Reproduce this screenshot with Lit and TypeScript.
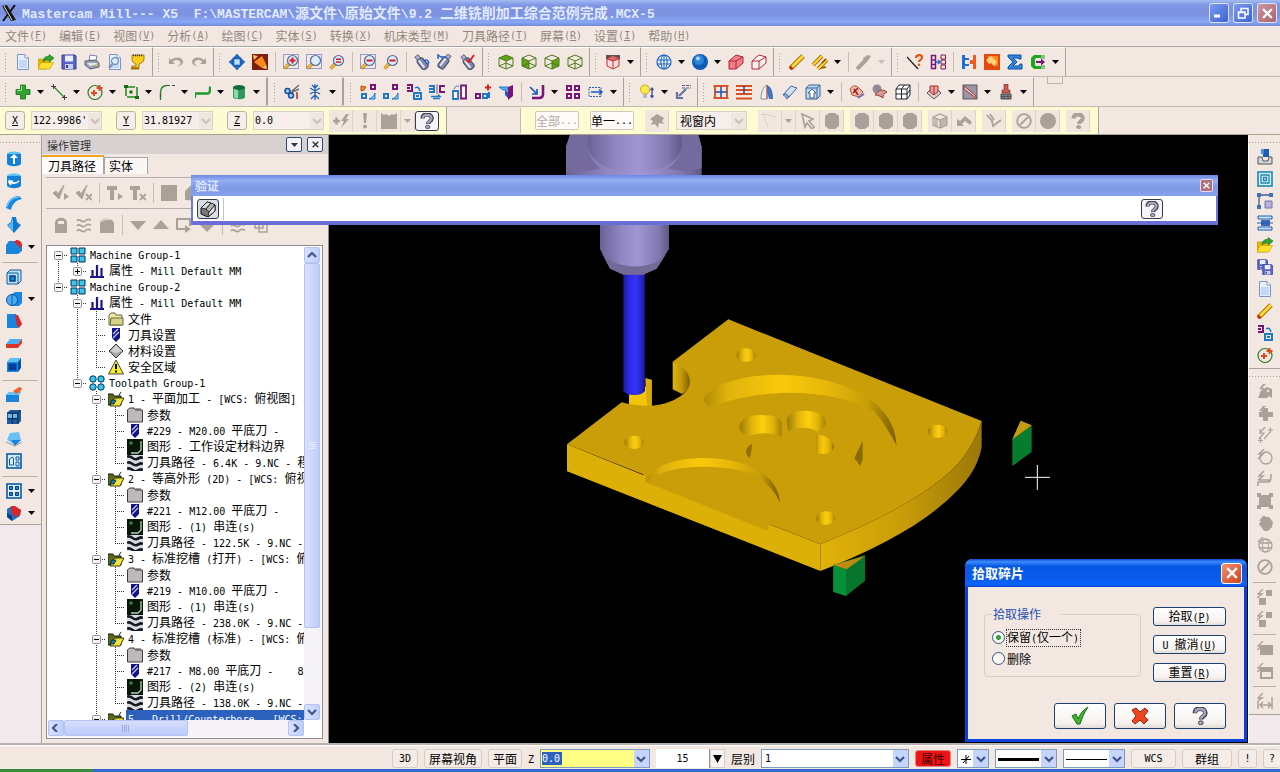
import { LitElement, html, svg, css } from "lit";

const G = "#aaa299";

/* ---------- icon building blocks, all on a 16 x 16 grid ---------- */

const page = svg`<path d="M2.500 .5h7.500l3.500 3.500v11.500h-11z" fill="#e4eefc" stroke="#7f95c4"/><path d="M4 6h8v8H4z" fill="#c3d8f6"/><path d="M10 .5v3.500h3.500" fill="#fff" stroke="#7f95c4"/>`;
const folderArrow = svg`<path d="M0 5h5l1 1.500h6V9l-3 6H0z" fill="#e8b800" stroke="#b98c00" stroke-width=".6"/><path d="M3 8.500h12.500L12 15H0z" fill="#ffe02e" stroke="#c49a00" stroke-width=".6"/><path d="M5 8c0-4 2.500-6 6-5.500V.5L16 4l-4.500 4V6C9 5.500 7 6 5 8z" fill="#2fa52f" stroke="#146b18" stroke-width=".6"/>`;
const floppy = (x = 0, y = 0) => svg`<g transform=${`translate(${x} ${y})`}><path d="M1 1h13l1 1v13H1z" fill="#5a62c8" stroke="#363c92"/><path d="M4 1.500h8v6H4z" fill="#e9eefc"/><path d="M4 10h8v5H4z" fill="#c9cfee"/><path d="M5 11h2v3H5z" fill="#363c92"/></g>`;
const lens = (inner: unknown, box = false) => svg`${box ? svg`<path d="M.5 .5h15v14H.5z" fill="none" stroke="#2b50b8" stroke-dasharray="1 1"/>` : ""}<path d="M6.500 9.500L1.500 14.500" stroke="#c98a1a" stroke-width="3.200"/><path d="M6.500 9.300L1.800 14" stroke="#ffd24a" stroke-width="1.200"/><circle cx="9.500" cy="6.500" r="5" fill="#dcebfb" stroke="#5b6e92" stroke-width="1.200"/>${inner}`;
const flask = (extra: unknown) => svg`<g transform="rotate(-38 8 9)"><rect x="4.500" y="4" width="7" height="12" rx="2.500" fill="#8087a8" stroke="#3d4468"/><rect x="6" y="5" width="2" height="9" fill="#e3e7f5"/><rect x="6" y="0" width="4" height="4" fill="#a9b0cc" stroke="#3d4468" stroke-width=".7"/></g>${extra}`;
const cube = (face: string, c: string, line = "#4e7a1e") => svg`${face === "t" ? svg`<path d="M1 4l7-3 7 3-7 3z" fill=${c}/>` : ""}${face === "l" ? svg`<path d="M1 4l7 3v8l-7-3z" fill=${c}/>` : ""}${face === "r" ? svg`<path d="M15 4L8 7v8l7-3z" fill=${c}/>` : ""}<path d="M1 4l7-3 7 3v8l-7 3-7-3zM1 4l7 3 7-3M8 7v8M1 12l7-3 7 3" fill="none" stroke=${line}/>`;
const sq = (x: number, y: number, c: string, s = 5) => svg`<rect x=${x + 1} y=${y + 1} width=${s - 1} height=${s - 1} fill="#fff" stroke=${c} stroke-width="2"/>`;
const P = "#7a1478";
const B = "#1f78c8";
const block = (top = "#5cc0f6") => svg`<path d="M1 5l3-4h11l-3 4z" fill=${top}/><path d="M1 5h11v10H1z" fill="#1688e0"/><path d="M12 5l3-4v10l-3 4z" fill="#0b4f9e"/>`;
const bolt = svg`<path d="M6 1L2 6h3L2 11l6-6H5l4-4z" fill=${G}/>`;
const plus = (x: number, y: number, c: string, s = 3) => svg`<path d=${`M${x - s} ${y}h${2 * s}M${x} ${y - s}v${2 * s}`} stroke=${c} stroke-width="2"/>`;
const question = (c1: string, c2: string) => svg`<path d="M3.500 5.500C3.500 2.500 5.500 1.500 8 1.500s4.800 1.300 4.800 3.800c0 3-3.800 3.200-3.800 5.700" fill="none" stroke=${c2} stroke-width="4"/><path d="M3.800 5.200C3.800 2.700 5.600 1.800 8 1.800s4.500 1.200 4.500 3.500c0 2.800-3.700 3-3.700 5.200" fill="none" stroke=${c1} stroke-width="2.200"/><ellipse cx="8.700" cy="14" rx="2.200" ry="1.700" fill=${c1} stroke=${c2} stroke-width=".8"/>`;

const ICONS: Record<string, unknown> = {
  page,
  open: folderArrow,
  save: floppy(),
  print: svg`<path d="M5 6l1-5 7 1-1 5z" fill="#fff" stroke="#7785ad"/><path d="M1 7l11-1 3 3v4l-9 2-5-4z" fill="#9aa0b6" stroke="#555c78"/><path d="M3 9l9 0 2 1-8 2z" fill="#e6e8f0"/><path d="M10 12l4-1" stroke="#e0b020"/>`,
  preview: svg`${page}<circle cx="8" cy="7" r="3.500" fill="#d7ecff" stroke="#5272b0"/><path d="M5.500 10L2 14" stroke="#8494b8" stroke-width="2.500"/>`,
  cup: svg`<path d="M2 1h12v4c0 3-3 4-5 5v4H2v-2h4v-2C4 9 2 8 2 5z" fill="#ffce1a" stroke="#8a6500" stroke-width=".8"/><path d="M3 1.500h10" stroke="#333" stroke-width="1.500" stroke-dasharray="1 1"/><path d="M1 14.500h8" stroke="#a07000" stroke-width="2"/>`,
  undo: svg`<path d="M1 4v6h6L4.800 7.800C7 5 12 5.500 12.500 8.500c.2 2-1.500 3-3.500 3.500 4 0 6-2 6-4.500C14.500 3 7 2 3 6z" fill=${G}/>`,
  redo: svg`<path d="M15 4v6H9l2.200-2.200C9 5 4 5.500 3.500 8.500c-.2 2 1.500 3 3.500 3.500-4 0-6-2-6-4.500C1.500 3 9 2 13 6z" fill=${G}/>`,
  pan: svg`<path d="M8 0l3.500 4h-7zM8 16l3.500-4h-7zM0 8l4-3.500v7zM16 8l-4-3.500v7z" fill="#1d72cf" stroke="#0b4288" stroke-width=".5"/><rect x="4.500" y="4.500" width="7" height="7" fill="#bfe0ff" stroke="#1a62b8" stroke-width="1.600"/>`,
  fit: svg`<rect width="16" height="16" fill="#7c1f10"/><path d="M2 8l8-6 4 8-4 4z" fill="#ff8a1c"/><path d="M1 1l5 1-4 4zM15 15l-5-1 4-4z" fill="#ffc26a"/>`,
  zin: lens(plus(9.5, 6.5, "#d41c1c"), true),
  zwin: lens("", true),
  zeq: lens(svg`<path d="M7 5.200h5M7 8h5" stroke="#d41c1c" stroke-width="1.600"/>`),
  zoutb: lens(svg`<path d="M6.500 6.500h6" stroke="#d41c1c" stroke-width="2"/>`, true),
  zout: lens(svg`<path d="M6.500 6.500h6" stroke="#d41c1c" stroke-width="2"/>`),
  flask1: flask(svg`<path d="M10 7c3-2 4-1 5 2M15 10l-3-1" stroke="#245fc0" fill="none" stroke-width="1.500"/>`),
  flask2: svg`<g transform="rotate(75 8 8)">${flask("")}</g><path d="M1 5V1l3 2h5" stroke="#245fc0" fill="none" stroke-width="1.500"/>`,
  flask3: flask(svg`<path d="M6 6l3 2 5-7" stroke="#d81c1c" fill="none" stroke-width="1.800"/>`),
  cubeT: cube("t", "#62a512"),
  cubeL: cube("l", "#62a512"),
  cubeR: cube("r", "#62a512"),
  cubeN: cube("", ""),
  redcube: svg`<path d="M1 1h14v4H1z" fill="#555"/><path d="M2 5l6-3 6 3v7l-6 3-6-3z" fill="#fbdcdc" stroke="#b33"/><path d="M2 5l6-3 6 3-6 2z" fill="#e06868"/><path d="M2 5l6 2 6-2M8 7v8" stroke="#b33" fill="none"/>`,
  globe: svg`<circle cx="8" cy="8" r="7" fill="#e9f4ff" stroke="#1a62b8" stroke-width="1.200"/><ellipse cx="8" cy="8" rx="3.200" ry="7" fill="none" stroke="#1a62b8"/><path d="M1 6h14M1 10h14M8 1v14" stroke="#1a62b8" fill="none"/>`,
  ball: svg`<circle cx="8" cy="8" r="8" fill="#0f5cb4"/><circle cx="7" cy="6" r="5" fill="#2d86dd"/><circle cx="6" cy="4.500" r="2" fill="#a9d6ff"/>`,
  solidRed: svg`<path d="M1 7l7-6 7 2v6l-7 6H1z" fill="#ef7f88" stroke="#b32232"/><path d="M1 7h7l7-4M8 7v8" stroke="#b32232" fill="none"/>`,
  wireRed: svg`<path d="M1 7l7-6 7 2v6l-7 6H1z" fill="#fff6f4" stroke="#b32232"/><path d="M1 7h7l7-4M8 7v8" stroke="#b32232" fill="none"/>`,
  pencil: svg`<path d="M2 14L14 2" stroke="#a87400" stroke-width="5"/><path d="M2.500 13.500L14 2" stroke="#ffd63a" stroke-width="3"/><path d="M1 15l2-2" stroke="#b83010" stroke-width="4"/>`,
  pencils: svg`<path d="M1 11L10 2M6 15l9-9" stroke="#a87400" stroke-width="4"/><path d="M1 11L10 2M6 15l9-9" stroke="#ffd63a" stroke-width="2"/><path d="M10 9l4-4M9 14l5-1" stroke="#8b4a00" stroke-width="1.500"/>`,
  gpencil: svg`<path d="M1 15L9 7" stroke=${G} stroke-width="4"/><path d="M7 4l5-3 3 1-4 6-3 1z" fill=${G}/>`,
  ask: svg`<path d="M0 3l11 12" stroke="#222" stroke-width="1.300"/><path d="M9 4c0-3 5-4 6-1.500S12 6 12 8" stroke="#e8531c" stroke-width="2.200" fill="none"/><circle cx="12" cy="10.800" r="1.300" fill="#e8531c"/>`,
  table: svg`<path d="M1.500 1v14M5.500 1v14M1 1.500h5M1 6h5M1 10.500h5M1 14.500h5" stroke=${P} stroke-width="1.500"/><path d="M11 1h4.500v4H11zM11 6h4.500v4H11zM11 11h4.500v4H11z" fill="#ffe9a0" stroke=${P}/><path d="M6 8h4M8 6l2 2-2 2" stroke="#2a6fd0" stroke-width="1.400" fill="none"/>`,
  link: svg`<path d="M1 1h3v14H1zM4 4h4v2H4zM4 10h4v2H4z" fill="#1c6fd4"/><path d="M12 1h3v14h-3v-5l-3 0V6h3z" fill="#ef5a24"/>`,
  orange: svg`<rect width="16" height="16" fill="#e3480f"/><path d="M3 2l11 0v9l-3 2z" fill="#ff8a20"/><path d="M2 6l5-4 6 6-3 4-3-3-2 1z" fill="#ffd27a"/>`,
  sigma: svg`<path d="M1 1h13v4h-2l-1-1H6l4 4-4 4h6l1-2h2v5H1v-2l5-5-5-5z" fill="#2f86dd" stroke="#114f9e"/>`,
  green: svg`<path d="M11 1H4L1 4v8l3 3h7v-3H6L5 11V5l1-1h5z" fill="#1da51d"/><path d="M12 1v4M14 1v4M12 11v4M14 11v4" stroke="#1da51d"/><path d="M6 7h5V4.500L15 8l-4 3.500V9H6z" fill=${P}/>`,

  plus: svg`<path d="M5.500 1h5v4.500H15v5h-4.500V15h-5v-4.500H1v-5h4.500z" fill="#2ea32e" stroke="#147016" stroke-width=".8"/><path d="M6.500 2v4.500H2" stroke="#9be58f" fill="none"/>`,
  line: svg`<path d="M3 3l10 10" stroke="#2a8c2a" stroke-width="1.300"/><path d="M0 2.500h5M2.500 0v5M11 13.500h5M13.500 11v5" stroke="#444"/>`,
  circle: svg`<circle cx="8" cy="8.500" r="7" fill="none" stroke="#2f7a2f" stroke-width="1.200"/>${plus(7, 9, "#e04a1c")}${plus(12.5, 4, "#e04a1c")}`,
  rect: svg`<rect x="3" y="3" width="11" height="10" fill="none" stroke="#1d8a1d" stroke-width="1.500" stroke-dasharray="9 2"/><path d="M1 1h4v3H1zM12 12h4v3h-4zM6.500 6.500h3v3h-3z" fill="#156e15"/>`,
  arc: svg`<path d="M1.500 15V9C1.500 4 4 1.500 8 1.500" fill="none" stroke="#2a8c2a" stroke-width="1.500"/><path d="M8 1.500h8M1.500 10v6" stroke="#444" stroke-dasharray="3 2" fill="none"/>`,
  spline: svg`<path d="M0 14V9.500h13c2 0 2-2 2-7" fill="none" stroke="#1e9a2a" stroke-width="2.300"/>`,
  cyl: svg`<path d="M2 3v10c0 3 12 3 12 0V3z" fill="#2f9a5c"/><path d="M3 4v9c1 1 3 2 4 1.500V4z" fill="#8fd8ac"/><ellipse cx="8" cy="3.500" rx="6" ry="2.500" fill="#166b3c"/>`,
  trim: svg`<path d="M15 1L8 7M15 5L6 9" stroke="#6a6a6a" stroke-width="1.500"/><circle cx="3.500" cy="7" r="2.500" fill="#9fd0ff" stroke="#1a4f9c" stroke-width="1.500"/><circle cx="7" cy="11.500" r="2.500" fill="#9fd0ff" stroke="#1a4f9c" stroke-width="1.500"/><path d="M13 8v7" stroke="#d01c1c" stroke-width="1.500"/>`,
  star: svg`<path d="M8 0v16M3 4l10 6M13 4L3 10M5 1l3 3 3-3M4 15l4-4 4 4" stroke="#1a62b8" stroke-width="1.300" fill="none"/>`,
  x1: svg`${sq(10, 0, P)}<path d="M1 7V2l5 1-2 3z" fill="#f08a30" stroke="#c04a10"/>${sq(1, 9, B)}<path d="M9 15c3-1 5-3 6-6v6z" fill="#7cc2f4" stroke=${B}/>`,
  x2: svg`${sq(9, 0, P)}${sq(0, 9, B)}<path d="M9 15c3-1 5-3 6-6v6z" fill="#7cc2f4" stroke=${B}/>`,
  x3: svg`<path d="M1 1h5v6H1M1 4h3" fill="none" stroke=${P} stroke-width="2"/><path d="M8 14V9h7v6H7M10 12h3" fill="none" stroke=${B} stroke-width="2"/><path d="M9 4c3-2 4 0 5 3" stroke=${B} fill="none" stroke-width="1.500"/>`,
  x4: svg`<path d="M0 2h5v6H0M0 5h4" fill="none" stroke=${B} stroke-width="2"/><path d="M16 2h-5v6h5" fill="none" stroke=${P} stroke-width="2"/><path d="M8 0v10" stroke="#666"/><path d="M2 12.500h9l-2-2M11 14.500H4" stroke=${B} fill="none" stroke-width="1.500"/>`,
  x5: svg`<path d="M1 7h5v8H1z" fill="#fff" stroke=${B} stroke-width="1.800"/><path d="M9 1.500h5v13H9z" fill="#fff" stroke=${P} stroke-width="1.800"/><path d="M2 5c1-3 3-3 5-3" stroke=${B} fill="none"/>`,
  x6: svg`${sq(0, 9, P)}${sq(7, 9, B)}<path d="M14 14V8" stroke=${B} stroke-width="2"/>${plus(13, 3.5, "#d82020")}`,
  x7: svg`<path d="M1 3h9v3H5z" fill="#5cb2f2" stroke=${B}/><path d="M10 3l5-2v11l-5 4z" fill=${P}/><path d="M7 6l3 2v6l-3-3z" fill="#1f58c8"/>`,
  x8: svg`<path d="M1 3l6 6M8 5v5H3" fill="none" stroke="#1d5ac2" stroke-width="1.700"/><path d="M14 1v9c0 3-2 4-4 4H3" fill="none" stroke=${P} stroke-width="2.600"/>`,
  x9: svg`${sq(1, 1, P, 5)}${sq(9, 1, P, 5)}${sq(1, 9, P, 5)}${sq(9, 9, P, 5)}`,
  x10: svg`<rect x="1" y="3.500" width="12" height="9" fill="none" stroke="#345fb0" stroke-dasharray="2 1"/><path d="M3 8h11M11 5.500L14 8l-3 2.500" stroke="#1d5ac2" fill="none" stroke-width="1.500"/>`,
  bulb: svg`<circle cx="6" cy="5.500" r="4.500" fill="#f7e94a" stroke="#c2ac1a"/><path d="M4 10h4v4H4z" fill="#b9b9c6"/><path d="M13 5v7M11.500 6L13 4l1.500 2M11.500 11.500L13 13.500l1.500-2" stroke="#444c9c" fill="none" stroke-width="1.300"/>`,
  note: svg`<path d="M7 1.500h9M7 4h9" stroke="#55597a" stroke-dasharray="3 1"/><path d="M11 5L4 12M2 8v6h6" stroke="#6a6fa2" stroke-width="2.200" fill="none"/>`,
  grid: svg`<rect x="2" y="2" width="12" height="12" fill="none" stroke="#d94e1b" stroke-width="1.800"/><path d="M8 2v12M2 8h12" stroke="#1e4fb0" stroke-width="1.500"/><path d="M0 2h16M0 14h16" stroke="#d94e1b"/>`,
  rows: svg`<path d="M0 2h16M0 6h16M0 10h16M0 14.500h16" stroke="#d94e1b" stroke-width="1.800"/><path d="M8 2v8" stroke="#1e4fb0" stroke-width="1.500"/>`,
  fin: svg`<path d="M2 15C2 8 4 3 8 1v14z" fill="#e6f1fc" stroke="#777" stroke-width=".8"/><path d="M8 1c5 2 6 8 6 14h-4L8 8z" fill="#3b77c6"/><path d="M8 1v14" stroke="#d94e1b"/>`,
  tube: svg`<path d="M1 11l8-9 6 2-8 9z" fill="#cfe0f5" stroke="#47618e"/><path d="M1 11c3-2 5 0 6 2l-3 2" fill="#87a6d6" stroke="#47618e"/>`,
  boxup: svg`<path d="M1 4l3-3h11v11l-3 3H1z" fill="#bcd8f4" stroke="#3c618f"/><path d="M1 4h11v11M12 4l3-3" stroke="#3c618f" fill="none"/><path d="M5 14V9H3l4-4 4 4H9v5z" fill="#fff" stroke="#3c618f"/>`,
  surf1: svg`<path d="M1 5C4 0 8 2 10 4l4 4-4 5-7-2z" fill="#f3b9a5" stroke="#b8503c"/><path d="M5 5l4 6M9 4L4 9" stroke="#902020" stroke-width="1.500"/><path d="M9 14l6-4" stroke="#6676c0" stroke-width="2"/>`,
  surf2: svg`<circle cx="5" cy="5" r="4.500" fill="#8e8a96"/><path d="M3 11c4-6 8-6 12-3-3 1-4 3-4 6-3-2-5-3-8-3z" fill="#cf9a94" stroke="#a83a34"/>`,
  wirebox: svg`<path d="M1 5l3-4h11v10l-3 4H1zM1 5h11v10M12 5l3-4M6.500 5v10M1 10h11M6.500 5l3-4M12 10l3-4" fill="#fff" stroke="#223"/>`,
  mill: svg`<path d="M1 9l3-3 8 0 3 3-7 6z" fill="#d8d4d8" stroke="#555"/><path d="M4 2h8v6l-4 3-4-3z" fill="#e3a49e" stroke="#b02a2a"/><path d="M8 2v9" stroke="#b02a2a"/>`,
  mill2: svg`<rect x="1" y="1" width="14" height="14" fill="#9b96a4" stroke="#5c5764"/><path d="M2 2l12 10v2L2 5z" fill="#e7e3ec" stroke="#b02a2a"/>`,
  drill: svg`<path d="M6 0h4v6h2v3H4V6h2z" fill="#c95b52" stroke="#7c2a26" stroke-width=".6"/><path d="M3 10h10v5H3z" fill="#8a8792" stroke="#444"/><path d="M3 12.500h10M6 10v5M10 10v5" stroke="#444" stroke-width=".7"/>`,

  gplus: svg`<path d="M0 8h7M3.500 4.500v7" stroke=${G} stroke-width="2.600"/><path d="M13 1L8 8h3l-3 7 8-9h-3l3-5z" fill=${G}/>`,
  gbang: svg`<path d="M6 0h4l-1 10H7z" fill=${G}/><circle cx="8" cy="13.500" r="2" fill=${G}/>`,
  gbox: svg`<path d="M0 0l3 2 2-1 3 2 3-2 2 1 3-2v16H0z" fill=${G}/>`,
  gtool: svg`<path d="M1 6l7-5 7 4-2 3 2 3-5-1-1 5-3-4-4 1 2-4z" fill=${G}/>`,
  gdots: svg`<path d="M1 1l5 13M1 1l14 3" stroke=${G} stroke-dasharray="1 2"/>`,
  garrow: svg`<path d="M2 1l11 5-4 2 5 6-2 2-5-6-2 4z" fill="none" stroke=${G} stroke-width="1.700"/>`,
  gball: svg`<path d="M5 0h6l4 3v10l-4 3H5l-4-3V3z" fill=${G}/>`,
  gbig: svg`<circle cx="8" cy="8" r="8" fill=${G}/>`,
  gcubew: svg`<path d="M1 4l7-3 7 3v8l-7 3-7-3zM1 4l7 3 7-3M8 7v8M3 5v8M5 6v8" fill="none" stroke=${G} stroke-width="1.200"/><path d="M8 7l7-3v8l-7 3z" fill=${G} opacity=".7"/>`,
  gback: svg`<path d="M1 13V6l3 2 5-5 7 6-2 3-5-4-3 3 2 2z" fill=${G}/>`,
  gcheck: svg`<path d="M1 2l5 6 1 5 8-6M4 1l4 6" fill="none" stroke=${G} stroke-width="1.800"/>`,
  gno: svg`<circle cx="8" cy="8" r="6.800" fill="none" stroke=${G} stroke-width="1.800"/><path d="M4 12l8-8" stroke=${G} stroke-width="1.800"/>`,
  gask: question(G, G),
  ask3d: question("#a8a8bc", "#3a3a4c"),

  l1: svg`<ellipse cx="8" cy="3" rx="7" ry="2.500" fill="#5cc0f6"/><path d="M1 3h14v10c-3 3-11 3-14 0z" fill="#1480d8"/><path d="M8 3l4 4H9v6H7V7H4z" fill="#fff"/>`,
  l2: svg`<ellipse cx="8" cy="3" rx="7" ry="2.500" fill="#5cc0f6"/><path d="M1 3h14v10c-3 3-11 3-14 0z" fill="#1480d8"/><path d="M3 7c2 4 7 4 10 1M5 12l-2-3 4-1" fill="none" stroke="#fff" stroke-width="1.700"/>`,
  l3: svg`<path d="M0 13C1 6 6 1 13 1l3 3C10 5 6 9 5 15z" fill="#1688e0"/><path d="M1 12C2 6 7 2 13 2" stroke="#6ac5f8" stroke-width="1.500" fill="none"/>`,
  l4: svg`<path d="M6 0h4l1 5 4 3-7 8-7-8 4-3z" fill="#1478d0"/><path d="M7 1v14L2 8l3-2z" fill="#5ab8f4"/>`,
  l5: svg`<path d="M0 6l3-4h9l4 4v6l-4 3H0z" fill="#1b84dc"/><path d="M10 1c4 0 6 2 6 6l-3 2c0-3-2-4-5-5z" fill="#d8262a"/>`,
  l6: svg`<path d="M1 4l3-3h11v11l-3 3H1z" fill="#bfe2fa" stroke="#0b5aa8"/><path d="M1 4h11v11" fill="none" stroke="#0b5aa8"/><rect x="4" y="7" width="5" height="5" fill="#1688e0" stroke="#063f7c" stroke-width="1.500"/>`,
  l7: svg`<path d="M6 3l3-2h7v11l-3 3H6z" fill="#1688e0"/><circle cx="6" cy="9" r="5.500" fill="#4aaef0" stroke="#0b5aa8"/><path d="M6 4v10" stroke="#0b5aa8"/>`,
  l8: svg`<path d="M1 1h9l5 10-3 4H1z" fill="#1b84dc"/><path d="M9 2l3 0 4 9-3 4-2-3z" fill="#d8262a"/>`,
  l9: svg`<path d="M0 9l4-5h12l-4 5z" fill="#4aaef0"/><path d="M0 9h12v4H0zM12 9l4-5v4l-4 5z" fill="#d8362a"/>`,
  l10: svg`${block()}<rect x="2.500" y="6.500" width="8" height="7" fill="#053b9a"/>`,
  l11: svg`<path d="M0 8l3-3h12l-2 3v7H0z" fill="#1b84dc"/><path d="M0 8l3-3h12l-2 3z" fill="#6ac5f8"/><path d="M7 4l6-4 3 1-1 3-5 3z" fill="#f0622a"/>`,
  l12: svg`<path d="M1 4l3-3h11v11l-3 3H1z" fill="#1a5c9e"/><path d="M1 4h11v11M6.500 4v11M1 9.500h11M12 4l3-3" stroke="#07294f" fill="none"/><path d="M2 5h4v4H2zM7 5h4v4H7z" fill="#6fb8ea"/>`,
  l13: svg`<path d="M4 2l9-1 2 8-6 5-8-5z" fill="#6ac0f4"/><path d="M5 9l4 6 6-6z" fill="#1b84dc"/><path d="M0 11l9 4 7-4" stroke="#999" fill="none"/>`,
  l14: svg`<rect x="1" y="1" width="14" height="14" fill="#d8eefc" stroke="#0b5aa8" stroke-width="1.600"/><path d="M3.500 12V6l3-2 1 2v6zM10 4h3v3h-3zM10 9h3v4h-3z" fill="none" stroke="#0b5aa8"/>`,
  l15: svg`<rect x="1" y="1" width="14" height="14" fill="#d8eefc" stroke="#0b5aa8" stroke-width="1.600"/><path d="M3.500 3.500h3v3h-3zM9.500 3.500h3v3h-3zM3.500 9.500h3v3h-3zM9.500 9.500h3v3h-3z" fill="#1b84dc" stroke="#083b78"/>`,
  l16: svg`<path d="M1 4l5-3 9 4-1 6-8 5-5-4z" fill="#1b70c8"/><path d="M5 1l4 0 6 4-1 5-5 2-4-5z" fill="#d8262a"/><path d="M1 8l5 3v5l-5-4z" fill="#0b3f84"/>`,

  r1: svg`<path d="M6 0h6v8H6z" fill="#1b5cb8"/><path d="M4 0h3v5H4z" fill="#4a90e0"/><path d="M1 8l4 0 1 4h5l1-4h3v7H1z" fill="#d5d7dc" stroke="#555"/>`,
  r2: svg`<rect x="1" y="1" width="14" height="14" fill="#d7f0f8" stroke="#1f88b4" stroke-width="1.600"/><path d="M4 4h8v8H4zM6.500 6.500h3v3h-3z" fill="none" stroke="#1f88b4" stroke-width="1.300"/>`,
  r3: svg`<path d="M2 15V2h12" stroke="#49598e" fill="none" stroke-width="1.300"/><path d="M0 0h4v4H0zM12 0h4v4h-4zM0 12h4v4H0z" fill="#3f6fc0"/><path d="M8 8h7v7H8z" fill="#b3b3dc" stroke="#77a"/>`,
  r4: svg`<path d="M1 1h14v3H1zM1 12h14v3H1z" fill="#cfe4f8" stroke="#1b5cb8"/><path d="M4 5h9v6H4z" fill="#3c68b4"/><path d="M0 8h16" stroke="#1b5cb8"/>`,
  r6: svg`<g transform="scale(.7)">${floppy(0, 0)}</g><g transform="translate(5 5) scale(.7)">${floppy()}</g>`,
  g1: svg`${bolt}<path d="M1 15l3-7 6-4 5 2v9l-3-2-2 2z" fill=${G}/><circle cx="11" cy="8" r="1.200" fill="#f3e8e1"/>`,
  g2: svg`${bolt}<path d="M6 3h5v4h5v5h-5v4H6v-4H2V7h4z" fill=${G}/>`,
  g3: svg`<path d="M3 2v5M8 0L3 6h4L2 12M7 12l6-7M11 3h5M13.500 .5v5M1 13.500h5M3.500 11v5" stroke=${G} fill="none" stroke-width="1.200"/>`,
  g4: svg`<circle cx="9" cy="9" r="6" fill="none" stroke=${G} stroke-width="1.300"/><path d="M7 0L2 5h4L1 10" stroke=${G} fill="none" stroke-width="1.500"/>`,
  g5: svg`<path d="M7 0L2 5h4L1 9M1 15v-4h9c4 0 4-3 4-8M2 9h12" stroke=${G} fill="none" stroke-width="1.500"/>`,
  g6: svg`<path d="M2 2h12v12H2z" fill=${G}/><path d="M0 0h4v4H0zM12 0h4v4h-4zM0 12h4v4H0zM12 12h4v4h-4z" fill=${G}/>`,
  g7: svg`${bolt}<path d="M2 9l5-7h5l4 5-1 5-4 4H7z" fill=${G}/>`,
  g8: svg`<circle cx="8.500" cy="8.500" r="6.500" fill="none" stroke=${G} stroke-width="1.300"/><ellipse cx="8.500" cy="8.500" rx="3" ry="6.500" fill="none" stroke=${G}/><path d="M2 6h13M2 11h13M6 0L1 5" stroke=${G} stroke-width="1.300"/>`,
  g10: svg`<path d="M6 0L1 5h4L0 9" stroke=${G} fill="none" stroke-width="1.400"/><path d="M9 1h6v6H9zM2 9h7v7H2z" fill=${G}/>`,
  g12: svg`<path d="M6 0L1 5h4L0 9" stroke=${G} fill="none" stroke-width="1.400"/><path d="M3 4h13v10H3z" fill=${G}/>`,
  g13: svg`<path d="M6 0L1 5h4L0 9" stroke=${G} fill="none" stroke-width="1.400"/><path d="M4 5h11v10H4z" fill="none" stroke=${G} stroke-width="2"/><path d="M4 6h11v3H4z" fill=${G}/>`,
  g14: svg`<path d="M6 0L1 5h4L1 8M1 8v8M15 4v12M3 12h11M6 9l-3 3 3 3M11 9l3 3-3 3" stroke=${G} fill="none" stroke-width="1.500"/>`,

  p1: svg`<path d="M0 8l3-2 2 3 6-9-5 14z" fill=${G} stroke=${G}/><path d="M11 8l5 3.500-5 3.500z" fill=${G}/>`,
  p2: svg`<path d="M0 8l3-2 2 3 6-9-5 14z" fill=${G} stroke=${G}/><path d="M10 9l6 6M16 9l-6 6" stroke=${G} stroke-width="1.800"/>`,
  p3: svg`<path d="M0 1h10v4H7v10H3V5H0z" fill=${G}/><path d="M11 8l5 3.500-5 3.500z" fill=${G}/>`,
  p4: svg`<path d="M0 1h10v4H7v10H3V5H0z" fill=${G}/><path d="M10 9l6 6M16 9l-6 6" stroke=${G} stroke-width="1.800"/>`,
  p5: svg`<path d="M0 0h16v16H0z" fill=${G}/>`,
  p6: svg`<path d="M1 15V6l5-5h10v15z" fill=${G}/>`,
  p7: svg`<path d="M2 6C2-1 14-1 14 6v10H2z" fill=${G}/><path d="M5 4h6v3H5z" fill="#f3e8e1"/>`,
  p8: svg`<path d="M1 4c3-4 5 3 8 0s4-1 6-1M1 9c3-4 5 3 8 0s4-1 6-1M1 14c3-4 5 3 8 0s4-1 6-1" stroke=${G} fill="none" stroke-width="1.700"/>`,
  p9: svg`<path d="M1 6C3 0 13 0 15 6v10H1z" fill=${G}/><path d="M3 5c2-3 6-3 8-2" stroke="#f3e8e1" fill="none"/>`,
  p10: svg`<path d="M0 4h16l-8 9z" fill=${G}/>`,
  p11: svg`<path d="M0 12h16L8 3z" fill=${G}/>`,
  p12: svg`<path d="M14 9V2H1v10h9" stroke=${G} fill="none" stroke-width="2"/><path d="M9 8l6 4-6 4z" fill=${G}/>`,
  p13: svg`<path d="M5 0h6v7h5l-8 8-8-8h5z" fill=${G}/>`,
  p14: svg`<path d="M2 3h8v8H2zM6 7h8v8H6z" stroke=${G} fill="none" stroke-width="1.500"/>`,
  verify: svg`<path d="M1 7l6-6 8 3v6l-7 6-7-3z" fill="#777" stroke="#111"/><path d="M1 7l6-6 4 1-5 6z" fill="#ddd" stroke="#111" stroke-width=".8"/><path d="M6 8l5-6 4 2-6 7z" fill="#b4b4b4" stroke="#111" stroke-width=".8"/><path d="M9 11l6-7v6l-7 6z" fill="#e2e2e2" stroke="#111" stroke-width=".8"/>`,

  group: svg`<path d="M1 1h6v6H1zM9 1h6v6H9zM1 9h6v6H1zM9 9h6v6H9z" fill="#35c8e8" stroke="#0b2c5c"/>`,
  tgroup: svg`<g fill="#35c8e8" stroke="#0b2c5c"><circle cx="4" cy="4" r="3.200"/><circle cx="12" cy="4" r="3.200"/><circle cx="4" cy="12" r="3.200"/><circle cx="12" cy="12" r="3.200"/></g>`,
  prop: svg`<path d="M1 14h14M3.500 14V7M8 14V2M12.500 14V5" stroke="#1a1490" stroke-width="2.200" fill="none"/>`,
  folder: svg`<path d="M1 14V4l2-2h4l1 2h6v10z" fill="#e9e6a8" stroke="#6b6838"/><path d="M3 7h12v7H2z" fill="#d6d28c" stroke="#6b6838"/>`,
  tool: svg`<path d="M4 1h8v10l-4 4-4-4z" fill="#10128c"/><path d="M5 7l5-5M5 11l6-6" stroke="#cfd3ff" stroke-width="1.100"/>`,
  stock: svg`<path d="M8 1l7 7-7 7-7-7z" fill="#a8a8a8" stroke="#333"/><path d="M8 2l6 6-6 2-5-2z" fill="#d2d2d2"/>`,
  warn: svg`<path d="M8 1l7.500 14H.5z" fill="#f6ef1d" stroke="#444"/><path d="M8 5v5M8 11.500v2" stroke="#000" stroke-width="2"/>`,
  op: svg`<path d="M0 14V3h5l1 2h7v9z" fill="#5a6b1c" stroke="#1c2408"/><path d="M3 13l3-6h10l-4 8H2z" fill="#f0e43a" stroke="#3a3a08"/><path d="M2 13l2-4h4l-2 4zM13 1l-3 5" fill="#1c7c96" stroke="#12304c"/>`,
  gfolder: svg`<path d="M.5 15V3l2-2h5l1 2h7v12z" fill="#bdb8bb" stroke="#3c3c3c"/><path d="M9 2h5" stroke="#3c3c3c"/>`,
  geom: svg`<path d="M0 0h16v16H0z" fill="#0a150a"/><path d="M14 2v9l-3 3H4" fill="none" stroke="#a8d4a8" stroke-width="1.300"/><path d="M2 4h4M4 2v4" stroke="#4aa04a"/>`,
  nc: svg`<path d="M0 0h16v16H0z" fill="#d8dbe0"/><path d="M0 2c4-3 6 4 10 2s4-2 6-1M0 8c4-3 6 4 10 2s4-2 6-1M0 14c4-3 6 4 10 2s4-2 6-1" stroke="#14181f" stroke-width="2.600" fill="none"/>`,
};

const icon = (name: string, size = 16) =>
  html`<svg class="ico" width=${size} height=${size} viewBox="0 0 16 16" aria-hidden="true">${ICONS[name]}</svg>`;
const tri = html`<svg width="7" height="4" viewBox="0 0 7 4" aria-hidden="true"><path d="M0 0h7L3.500 4z" fill="currentColor"/></svg>`;
const chevron = (d = "M1 2l4 4 4-4") => html`<svg width="10" height="8" viewBox="0 0 10 8" aria-hidden="true"><path d=${d} fill="none" stroke="currentColor" stroke-width="2.200"/></svg>`;
const cross = (s: number) => html`<svg width=${s} height=${s} viewBox="0 0 10 10" aria-hidden="true"><path d="M1 1l8 8M9 1L1 9" stroke="currentColor" stroke-width="2"/></svg>`;

/** Latin runs are set in the narrower monospace so that one ideograph spans two columns. */
const mixed = (s: string) =>
  s.split(/([\u2e80-\uffff]+)/).map((r) => (/[\u2e80-\uffff]/.test(r) || !r ? r : html`<span class="a">${r}</span>`));
const key = (s: string, k: string) => html`${mixed(s)}<span class="a">(<u>${k}</u>)</span>`;

/* "|" is a separator, a trailing ">" adds a drop-down arrow */
const ROW1 = [
  "page open save print preview cup",
  "undo redo",
  "pan fit | zin zwin zeq | zoutb zout | flask1 flask2 flask3",
  "cubeT cubeL cubeR cubeN",
  "redcube>",
  "globe> ball> solidRed wireRed",
  "pencil pencils> | gpencil>",
  "ask table | link orange sigma green>",
];
const ROW2 = [
  "plus> line> circle> rect> arc> spline> cyl>",
  "trim star>",
  "x1 x2 x3 x4 x5 x6 x7 | x8> x9 x10>",
  "bulb> note",
  "grid rows fin tube boxup> | surf1 surf2 wirebox | mill> mill2> drill>",
];
const LEFT = "l1 l2 l3 l4 l5> | l6 l7> l8 l9 l10 | l11 l12 l13 l14 | l15> l16>";
const RIGHT_A = "r1 r2 r3 r4 open r6 page pencil x3 circle";
const RIGHT_B = "g1 g2 g3 g4 g5 g6 g7 g8 gno | g10 g10 | g12 g13 | g14";

const cells = (list: string) =>
  list.split(" ").map((n) => {
    if (n === "|") return html`<i class="sep"></i>`;
    const drop = n.endsWith(">");
    const id = drop ? n.slice(0, -1) : n;
    return html`<button class="cell" aria-label=${id}>${icon(id)}</button>${drop
      ? html`<button class="drop ${id.startsWith("gp") ? "off" : ""}" aria-label="${id} menu">${tri}</button>`
      : ""}`;
  });

const MENU: [string, string][] = [
  ["文件", "F"], ["编辑", "E"], ["视图", "V"], ["分析", "A"], ["绘图", "C"], ["实体", "S"],
  ["转换", "X"], ["机床类型", "M"], ["刀具路径", "T"], ["屏幕", "R"], ["设置", "I"], ["帮助", "H"],
];

const operation = (title: string, tool: string, geometry: string, path: string): [string, string, string][] => [
  ["..b", "op", title],
  ["..|t", "gfolder", "参数"],
  ["..|t", "tool", tool],
  ["..|t", "geom", geometry],
  ["..|l", "nc", path],
];
const TREE: [string, string, string][] = [
  ["a", "group", "Machine Group-1"],
  ["|p", "prop", "属性 - Mill Default MM"],
  ["c", "group", "Machine Group-2"],
  [".b", "prop", "属性 - Mill Default MM"],
  [".|t", "folder", "文件"],
  [".|t", "tool", "刀具设置"],
  [".|t", "stock", "材料设置"],
  [".|l", "warn", "安全区域"],
  [".c", "tgroup", "Toolpath Group-1"],
  ...operation("1 - 平面加工 - [WCS: 俯视图] -", "#229 - M20.00 平底刀 -", "图形 - 工作设定材料边界", "刀具路径 - 6.4K - 9.NC - 程"),
  ...operation("2 - 等高外形 (2D) - [WCS: 俯视图]", "#221 - M12.00 平底刀 -", "图形 - (1) 串连(s)", "刀具路径 - 122.5K - 9.NC -"),
  ...operation("3 - 标准挖槽 (打开) - [WCS: 俯视图]", "#219 - M10.00 平底刀 -", "图形 - (1) 串连(s)", "刀具路径 - 238.0K - 9.NC -"),
  ...operation("4 - 标准挖槽 (标准) - [WCS: 俯视图]", "#217 - M8.00 平底刀 -    8", "图形 - (2) 串连(s)", "刀具路径 - 138.0K - 9.NC -"),
  ["..b", "op", "5 - Drill/Counterbore - [WCS:"],
];

/* Guides with continuing branches also run through the next level's blank column. */
const guide = (c: string) => {
  const up = "|tlbcp".includes(c);
  const down = "|tab".includes(c);
  const right = "tlabcp".includes(c);
  const box = "abcp".includes(c);
  return html`<svg class="guide" width="19" height="16" viewBox="0 0 19 16" aria-hidden="true">
    <g stroke="#333" stroke-dasharray="1 1" fill="none">
      ${up ? svg`<path d="M9.500 0v8"/>` : ""}${down ? svg`<path d="M9.500 8v8"/>` : ""}${right ? svg`<path d="M9 8.500h10"/>` : ""}
    </g>
    ${box ? svg`<rect x="5.500" y="4.500" width="8" height="8" rx="1" fill="#f7f4ef" stroke="#8a94a4"/><path d=${c === "p" ? "M7 8.500h5M9.500 6v5" : "M7 8.500h5"} stroke="#000"/>` : ""}
  </svg>`;
};

const hole = (x: number, y: number) => svg`<ellipse cx=${x} cy=${y} rx="29" ry="20" fill="url(#hole)"/>`;

const scene = html`<svg class="scene" viewBox="329 135 919 608" preserveAspectRatio="xMinYMin slice" role="img" aria-label="刀具路径验证">
  <defs>
    <linearGradient id="hole"><stop offset="0" stop-color="#9a7a06"/><stop offset=".3" stop-color="#e4b60c"/><stop offset=".55" stop-color="#fcd00e"/><stop offset=".8" stop-color="#e0b20a"/><stop offset="1" stop-color="#a28006"/></linearGradient>
    <linearGradient id="wall"><stop offset="0" stop-color="#b08b06"/><stop offset=".12" stop-color="#e0b20c"/><stop offset=".4" stop-color="#fac80a"/><stop offset=".65" stop-color="#e6b60a"/><stop offset=".85" stop-color="#c69e08"/><stop offset="1" stop-color="#7a5c04"/></linearGradient>
    <linearGradient id="rim"><stop offset="0" stop-color="#e2b20a"/><stop offset=".5" stop-color="#c99d08"/><stop offset="1" stop-color="#9a7808"/></linearGradient>
    <linearGradient id="notch"><stop offset="0" stop-color="#e0b20a"/><stop offset=".5" stop-color="#c29806"/><stop offset="1" stop-color="#806204"/></linearGradient>
    <linearGradient id="blue"><stop offset="0" stop-color="#1c1a9c"/><stop offset=".25" stop-color="#2a28e0"/><stop offset=".55" stop-color="#3534fa"/><stop offset=".85" stop-color="#2624c8"/><stop offset="1" stop-color="#17157c"/></linearGradient>
    <linearGradient id="steel"><stop offset="0" stop-color="#6a6296"/><stop offset=".3" stop-color="#8f86c2"/><stop offset=".55" stop-color="#a096d4"/><stop offset=".85" stop-color="#8178b0"/><stop offset="1" stop-color="#5f5888"/></linearGradient>
  </defs>
  <rect x="329" y="135" width="919" height="608" fill="#000"/>
  <g transform="translate(560 310) scale(.33333)">
    <path d="M207 230h50v-25l18 5v90h-68z" fill="#f4c40a"/>
    <path d="M257 205l18 5v80h-14z" fill="#d8ac08"/>
    <path d="M505 28L1265 333c-14 46-36 86-62 118-70 84-220 170-422 252L21 403l164-126c30 8 70 14 102 9 38-6 70-20 90-41 20-26 10-62-39-90z" fill="#c99e08"/>
    <path d="M250 490l382 150-12 24-370-146z" fill="#c99e08"/>
    <path d="M338 155c34 16 52 36 52 60 0 12-5 22-13 30l-11 7-28-14z" fill="url(#notch)"/>
    <path d="M21 403l234 94v18l365 147 8-19 153 60v80L21 484z" fill="#ddb008"/>
    <path d="M781 703C983 621 1133 535 1203 451c26-32 48-72 62-118v79c-10 50-34 92-75 132-90 92-230 170-409 239z" fill="url(#rim)"/>
    <path d="M432 265c28-48 128-72 228-71 190 3 345 80 350 212-22-40-44-76-70-104-70-36-160-54-250-54-90 0-180 20-240 44-12-6-18-14-18-27z" fill="url(#wall)"/>
    <path d="M257 518c14-50 90-74 173-74 130 0 225 50 230 134-14-32-36-54-68-82-50-18-104-26-162-26-80 0-138 16-173 48z" fill="url(#wall)"/>
    <path d="M538 350c4-26 32-35 67-35 38 0 56 8 60 22v45c-26-14-66-16-94-4-22-4-34-12-33-28z" fill="url(#hole)"/>
    <path d="M680 326c10-18 30-24 56-24 40 0 61 16 62 36-4 14-14 22-28 26-22-14-60-14-84 0-4-10-6-24-6-38z" fill="url(#hole)"/>
    <path d="M770 372c30 4 50 20 52 40-6 18-24 24-52 17z" fill="url(#wall)"/>
    <path d="M576 402c-20 8-24 28-8 42 6-12 8-28 8-42z" fill="#8f6f06"/>
    <path d="M908 392l-25 52 18 24 7-20z" fill="#8a6c06"/>
    ${hole(558, 135)}${hole(222, 397)}${hole(1133, 364)}${hole(797, 624)}
    <path d="M1357 388l25-56 33 14v80l-58 42z" fill="#067c2c"/><path d="M1357 388l25-56 33 14z" fill="#c99a10"/>
    <path d="M820 765l95-30v77l-57 46-38-13z" fill="#07752b"/><path d="M820 765l38 13v80l-38-13z" fill="#089038"/><path d="M820 765l40 13 55-40z" fill="#c08a10"/>
    <path d="M1432 465v75M1395 502h75" stroke="#fff" stroke-width="3"/>
  </g>
  <g transform="translate(560 134) scale(.33333)">
    <path d="M190 400h65v370c-8 17-57 17-65 0z" fill="url(#blue)"/>
    <path d="M30 3h385l10 35v120H18V38z" fill="url(#steel)"/>
    <path d="M30 3h52c-2 50 10 80 40 100-40 12-80 14-104 10V38zM415 3h-50c2 50-10 80-40 100 40 12 76 8 100 0V38z" fill="#746a9e"/>
    <path d="M82 3h283v34c-6 50-70 78-142 78S90 84 82 34z" fill="url(#steel)"/>
    <path d="M120 250h207v95l-37 58-40 18h-60l-40-18-30-58z" fill="url(#steel)"/>
    <path d="M122 350c30 60 170 66 203 0l-35 54-40 18h-60l-40-18z" fill="#736a98"/>
  </g>
</svg>`;

class AppRoot extends LitElement {
  static styles = css`
    :host { display: flex; flex-direction: column; height: 100vh; overflow: hidden; position: relative; background: #f3e8e1; color: #000;
      font: 12px/16px "Noto Sans CJK SC", sans-serif; --mono: "DejaVu Sans Mono", monospace; }
    * { box-sizing: border-box; }
    svg { display: block; flex: none; }
    button, input, select { font: inherit; color: inherit; margin: 0; padding: 0; border: 0; background: none; min-width: 0; border-radius: 0; }
    button { display: flex; align-items: center; justify-content: center; flex: none; white-space: nowrap; }
    .a { font-family: var(--mono); font-size: 10px; white-space: pre; }
    u { text-underline-offset: 1px; }

    .title { flex: none; height: 26px; display: flex; align-items: center; gap: 4px; padding: 0 3px 0 1px; color: #e2eaff; white-space: pre;
      background: linear-gradient(#a3bcf4, #7f96e4 20%, #7c92e0 55%, #88a8f6 85%, #7088d8); font-size: 14px; font-weight: bold; }
    .title .a { font: bold 13px "Liberation Mono", monospace; }
    .title h1 { font: inherit; margin: 0; flex: 1; }
    .wb { width: 20px; height: 20px; border: 1px solid #dfe6fb; border-radius: 3px; background: linear-gradient(135deg, #7c9cf0, #3a62d4); color: #fff; }
    .wb.x { background: linear-gradient(135deg, #cf98a0, #ac5f6c); }
    .menu { flex: none; height: 21px; display: flex; align-items: center; border-bottom: 1px solid #aaa49e; color: #8f8780; }
    .menu button { padding: 0 6px; }
    .menu button:first-child { padding-left: 5px; }

    .row { flex: none; height: 30px; display: flex; border-bottom: 1px solid #c3bab4; }
    .band { display: flex; align-items: center; padding-right: 3px; border-right: 1px solid #a9a29c; border-top: 1px solid #fff; }
    .grip { width: 11px; height: 20px; flex: none; background: radial-gradient(circle, #a79f99 1px, transparent 1px) 4px 0 / 3px 3px repeat-y; }
    .cell { width: 23px; height: 22px; }
    .drop { width: 13px; height: 22px; }
    .off { color: #c6beb8; }
    .sep { width: 8px; height: 20px; flex: none; background: linear-gradient(#c5bcb6, #c5bcb6) center / 1px 100% no-repeat; }
    .row2 .band:nth-child(-n+2) { margin-right: 2px; box-shadow: 2px 0 0 -1px #a9a29c; }
    .stub { width: 16px; height: 7px; margin-left: 13px; border: 1px solid #bdb4ae; border-top: 0; }

    .ribbon { flex: none; height: 28px; display: flex; align-items: center; border-bottom: 1px solid #a9a48c; }
    .yellow { align-self: stretch; display: flex; align-items: center; background: #fdfbd2; border-right: 1px solid #a9a29c; }
    .y1 { padding: 0 7px 0 5px; }
    .y2 { padding: 0 8px 0 14px; }
    .blank { align-self: stretch; width: 74px; margin: 1px 0; border-right: 1px solid #c3bab4; }
    .axis { display: flex; align-items: center; gap: 6px; margin-right: 14px; }
    .axis:nth-child(3) { margin-right: 5px; }
    .axis label { width: 20px; height: 19px; border: 1px solid #b9b2aa; border-radius: 3px; background: #f6eee8; display: flex; justify-content: center; align-items: center; text-decoration: underline; }
    .num { width: 71px; height: 19px; display: flex; align-items: center; border: 1px solid #d9d2c6; background: #f6eeea; }
    .num input { flex: 1; font: 10px/16px var(--mono); padding-left: 1px; }
    .num button, .pick .arr { width: 15px; height: 16px; color: #c9c1bb; background: #f0e6e0; }
    .num button { width: 13px; }
    .dim { width: 24px; height: 22px; background: #f1e7de; border-right: 1px solid #ddd3c8; }
    .dim.sm { width: 14px; color: #aaa299; }
    .help { width: 24px; height: 20px; border: 1px solid #333b4c; border-radius: 3px; background: #f6f4f6; }
    .txt { width: 44px; height: 19px; border: 1px solid #cfc7bd; background: #fdfaf7; border-radius: 2px; margin-right: 11px; }
    .txt.gray { color: #b3aaa2; }
    .gap { width: 6px; flex: none; }

    .pick { display: grid; align-items: center; }
    .pick > * { grid-area: 1 / 1; }
    .pick select { appearance: none; width: 100%; height: 100%; padding-left: 3px; }
    .pick .arr { justify-self: end; display: flex; align-items: center; justify-content: center; pointer-events: none; }
    .scope { width: 71px; height: 19px; margin: 0 11px 0 7px; border: 1px solid #d9d2c6; background: #f6eeea; }

    .work { flex: 1; min-height: 0; display: flex; position: relative; }
    .vbar { flex: none; display: flex; flex-direction: column; background: #f1e9ec; }
    .vbar .tray { background: #f3e8e1; padding: 13px 0 0 2px; border-bottom: 1px solid #a9a29c; display: grid; grid-template-columns: 23px 13px; background-image: radial-gradient(circle, #a79f99 1px, transparent 1px); background-size: 3px 3px; background-repeat: repeat-x; background-position: 2px 6px; }
    .vbar .tray .cell { grid-column: 1; }
    .vbar .tray .drop { grid-column: 2; }
    .vbar .tray .sep { grid-column: 1 / 3; width: auto; height: 8px; background: linear-gradient(#b9b0aa, #b9b0aa) center / 100% 1px no-repeat; }
    .left { width: 42px; border-right: 1px solid #a9a29c; }
    .right { width: 32px; border-left: 1px solid #fff; }
    .right .tray { padding: 11px 0 2px 4px; grid-template-columns: 23px; }
    .right .tray .sep { grid-column: 1; }

    .panel { width: 287px; flex: none; display: flex; flex-direction: column; padding: 0 5px 4px 4px; border-right: 1px solid #8f8a88; }
    .phead { height: 19px; margin: 0 -5px 0 -4px; padding: 0 5px; background: #d8d1d2; display: flex; align-items: center; gap: 5px; flex: none; color: #333; }
    .phead span { flex: 1; font-size: 11px; }
    .phead button { width: 16px; height: 15px; border: 1px solid #2f4870; border-radius: 2px; background: #f4f2f6; }
    .tabs { height: 20px; display: flex; align-items: flex-end; flex: none; margin-left: -4px; }
    .tabs button { height: 17px; width: 44px; background: #faf6f4; border: 1px solid #a9a5a8; border-bottom: 0; justify-content: flex-start; padding-left: 4px; }
    .tabs .on { width: 62px; height: 19px; padding-left: 6px; border-top: 2px solid #f0a42c; border-left: 0; background: #fdfbfa; }
    .ptools { flex: none; height: 31px; display: flex; align-items: center; padding-left: 3px; border-bottom: 1px solid #b5ada7; overflow: hidden; }
    .ptools.first { margin-top: 3px; border-top: 1px solid #b5ada7; height: 32px; }
    .ptools.last { border: 0; margin-bottom: 5px; }
    .tree { flex: 1; min-height: 0; display: grid; grid-template: minmax(0, 1fr) 17px / minmax(0, 1fr) 17px; background: #fff; border: 1px solid #8e8c92; padding: 1px; }
    .items { overflow: hidden; padding-left: 1px; }
    .node { height: 16px; display: flex; align-items: center; white-space: pre; }
    .node .ico { margin: 0 2px; }
    .node .lab { flex: 1; min-width: 0; padding-left: 2px; line-height: 16px; overflow: hidden; white-space: pre; }
    .node.sel .lab { background: #2c62bd; color: #fff; }
    .sb { display: flex; background: #f6f3f8; }
    .sb.v { flex-direction: column; }
    .sb button, .sb i { flex: none; width: 16px; height: 16px; border: 1px solid #b4c3f2; border-radius: 2px; background: linear-gradient(90deg, #d9e2fd, #bfcdfa); color: #43588c; display: flex; align-items: center; justify-content: center; }
    .sb.v i { height: auto; flex: 363; }
    .sb.v b { flex: 76; }
    .sb.h i { width: auto; flex: 122; background: linear-gradient(#d5defd, #bccafa); }
    .sb.h b { flex: 100; }
    .sb i svg { opacity: .8; }

    .view { flex: 1; min-width: 0; position: relative; background: #000; overflow: hidden; }
    .scene { width: 100%; height: 100%; }
    .float { position: absolute; left: 191px; right: 62px; top: 40px; background: #fff; border: 2px solid #6c78dc; border-top: 0; border-bottom: 4px solid #6c6cd6; }
    .ftitle { height: 21px; margin: 0 -2px; padding: 0 5px 0 4px; background: linear-gradient(#6f86e0, #93b0f4 25%, #7e98e6 60%, #86a2ee); color: #dfe8ff; font-weight: bold; display: flex; align-items: center; justify-content: space-between; }
    .ftitle button { width: 13px; height: 13px; border: 1px solid #e9dce8; border-radius: 2px; background: #b0707c; color: #fff; }
    .fbody { height: 25px; display: flex; align-items: center; padding: 0 53px 0 4px; }
    .fbody .help { width: 22px; }
    .fbody .help:first-child { background: #d9dde8; }
    .fbody span { flex: 1; height: 22px; margin-left: 4px; border-left: 1px solid #c5c5d2; }

    .dialog { position: absolute; right: 1px; bottom: 1px; width: 282px; border: 3px solid #0a41dc; border-top: 0; border-radius: 7px 7px 0 0; background: #f3e8e1; }
    .dtitle { height: 28px; margin: 0 -3px; padding: 0 5px 0 7px; border-radius: 7px 7px 0 0; display: flex; align-items: center; justify-content: space-between; color: #fff; font-size: 13px; font-weight: bold;
      background: linear-gradient(#0a48d0, #3c8cfc 10%, #0858e4 25%, #0a5cf0 75%, #0a66fc 90%, #0a44d0); }
    .dtitle button { width: 21px; height: 21px; border: 1px solid #fff; border-radius: 3px; background: linear-gradient(135deg, #f09070, #d2401c); color: #fff; }
    .dbody { padding: 20px 18px 10px 16px; }
    .dtop { display: flex; gap: 12px; align-items: flex-start; }
    fieldset { flex: 1; min-width: 0; height: 70px; margin: 0; padding: 6px 0 0 7px; border: 1px solid #d8cfc2; border-radius: 4px; }
    legend { color: #1e50b4; padding: 0 20px 0 1px; margin-left: 0; line-height: 14px; }
    fieldset label { display: flex; align-items: center; height: 21px; gap: 2px; }
    fieldset label span.f { outline: 1px dotted #333; line-height: 14px; padding-right: 1px; }
    input[type="radio"] { appearance: none; width: 13px; height: 13px; border: 1px solid #2f5580; border-radius: 50%; background: #fbfaf8; flex: none; }
    input[type="radio"]:checked { background: radial-gradient(circle, #2aa52a 2px, #fbfaf8 3px); }
    .dcol { display: flex; flex-direction: column; gap: 9px; }
    .xp { border: 1px solid #1f3f6c; border-radius: 3px; background: linear-gradient(#fff, #f6f1ee 80%, #e2dbd6); }
    .dcol .xp { width: 73px; height: 19px; }
    .dfoot { display: flex; justify-content: flex-end; gap: 8px; margin-top: 21px; }
    .dfoot .xp { width: 52px; height: 26px; }

    .status { flex: none; height: 26px; display: flex; align-items: center; justify-content: flex-end; gap: 6px; padding-top: 3px; border-top: 2px solid #b8b0ac; box-shadow: inset 0 1px #fff; }
    .status > button { height: 19px; padding: 0 4px; border: 1px solid #d6ccc6; border-radius: 3px; background: #f5ece7; }
    .status .edit { height: 19px; display: flex; align-items: center; border: 1px solid #7c9cc0; background: #fff; }
    .status .arr, .edit button { width: 15px; height: 17px; color: #3c558c; background: #c7d4fb; }
    .edit .zv { width: 20px; margin-left: 1px; background: #2c62bd; color: #fff; font: 10px/13px var(--mono); }
    .edit .fill { flex: 1; }
    .status .yb { background: #ffff86; width: 110px; }
    .status .pick { height: 19px; border: 1px solid #7c9cc0; background: #fff; }
    .status .pick select { font: 10px/16px var(--mono); }
    .status .n15 { width: 54px; height: 19px; background: #fff; text-align: center; font: 10px/16px var(--mono); border-right: 1px solid #999; }
    .status .tri { width: 15px; padding: 0; margin-left: -6px; background: #f7f5f4; border-radius: 0; }
    .status .red { background: #f01414; border-color: #d88; padding: 0 5px; height: 17px; color: #400; }
    .status .lay { width: 148px; }
    .status .mk { width: 32px; }
    .status .ln { width: 62px; }
    .status .ln select, .status .mk select { color: transparent; }
    .ink { pointer-events: none; justify-self: start; margin-left: 2px; }
    .status .w0 { width: 26px; }
    .status .w1 { width: 45px; }
    .status .w2 { width: 50px; }
    .status .w3 { width: 19px; }
    .status .w4 { width: 17px; border-right: 0; }
    .task { flex: none; height: 3px; display: flex; background: #2f6ad4; }
    .task i { width: 93px; background: #3a8c3a; }
  `;

  private bar(rows: string[], cls: string, extra: unknown = "") {
    return html`<div class="row ${cls}">
      ${rows.map((r) => html`<div class="band"><i class="grip"></i>${cells(r)}</div>`)}${extra}
    </div>`;
  }

  private axis(name: string, value: string) {
    return html`<div class="axis"><label for=${"ax" + name}><span class="a">${name}</span></label>
      <div class="num"><input id=${"ax" + name} .value=${value} /><button aria-label="${name} history">${chevron()}</button></div></div>`;
  }

  private dims(list: string) {
    return list.split(" ").map((n) =>
      n === "_" ? html`<i class="gap"></i>` : n === ">" ? html`<button class="dim drop sm" aria-label="more">${tri}</button>` : html`<button class="dim" aria-label=${n}>${icon(n)}</button>`);
  }

  private line(label: string, weight: number) {
    return html`<div class="pick ln">
      <select aria-label=${label}><option></option></select>
      <svg class="ink" width="41" height="8" viewBox="0 0 41 8"><path d="M0 4.500h41" stroke="#000" stroke-width=${weight} /></svg>
      <span class="arr">${chevron()}</span></div>`;
  }

  render() {
    return html`
      <header class="title">
        <svg width="17" height="18" viewBox="0 0 17 18"><path d="M1 2l5-1 9 15-5 1z" fill="#222"/><path d="M14 1L2 17M4 2l9 14" stroke="#111" stroke-width="2"/><path d="M3 2l8 14" stroke="#e8e0b8"/></svg>
        <h1>${mixed("Mastercam Mill--- X5  F:\\MASTERCAM\\源文件\\原始文件\\9.2 二维铣削加工综合范例完成.MCX-5")}</h1>
        <button class="wb" aria-label="minimize"><svg width="12" height="12" viewBox="0 0 12 12"><path d="M1 9h6" stroke="#fff" stroke-width="3"/></svg></button>
        <button class="wb" aria-label="restore"><svg width="12" height="12" viewBox="0 0 12 12"><path d="M4 4V1.500h7v6H8.500M1.500 5h6.500v6H1.500zM1 5.500h7" stroke="#fff" stroke-width="1.500" fill="none"/></svg></button>
        <button class="wb x" aria-label="close">${cross(11)}</button>
      </header>
      <nav class="menu">${MENU.map(([n, k]) => html`<button>${key(n, k)}</button>`)}</nav>
      ${this.bar(ROW1, "row1")}
      ${this.bar(ROW2, "row2", html`<div class="stub"></div>`)}
      <div class="ribbon">
        <div class="yellow y1">
          ${this.axis("X", "122.9986'")}${this.axis("Y", "31.81927")}${this.axis("Z", "0.0")}
          ${this.dims("gplus gbang gbox >")}
          <button class="help" aria-label="help">${icon("ask3d")}</button>
        </div>
        <div class="blank"></div>
        <div class="yellow y2">
          <button class="txt gray">${mixed("全部...")}</button>
          <button class="txt">${mixed("单一...")}</button>
          ${this.dims("gtool")}
          <div class="pick scope"><select aria-label="范围"><option>视窗内</option></select><span class="arr">${chevron()}</span></div>
          ${this.dims("gdots > garrow gball _ gball gball gball _ gcubew gback _ gcheck _ gno gbig _ gask")}
        </div>
      </div>

      <main class="work">
        <div class="vbar left"><div class="tray">${cells(LEFT)}</div></div>
        <section class="panel">
          <div class="phead"><span>操作管理</span><button aria-label="menu">${tri}</button><button aria-label="close">${cross(7)}</button></div>
          <div class="tabs"><button class="on">刀具路径</button><button>实体</button></div>
          <div class="ptools first">${cells("p1 p2 | p3 p4 | p5 p6")}</div>
          <div class="ptools last">${cells("p7 p8 p9 | p10 p11 p12 p13 | p8 p14")}</div>
          <div class="tree">
            <div class="items" role="tree">
              ${TREE.map(([g, ic, label], i) => html`<div class="node ${i === TREE.length - 1 ? "sel" : ""}" role="treeitem">
                ${[...g].map(guide)}${icon(ic)}<span class="lab">${mixed(label)}</span></div>`)}
            </div>
            <div class="sb v"><button aria-label="up">${chevron("M1 6l4-4 4 4")}</button><i><svg width="7" height="8" viewBox="0 0 7 8"><path d="M0 .5h7M0 2.500h7M0 4.500h7M0 6.500h7" stroke="#eef2ff"/></svg></i><b></b><button aria-label="down">${chevron()}</button></div>
            <div class="sb h"><button aria-label="left">${chevron("M6 0L2 4l4 4")}</button><i><svg width="8" height="7" viewBox="0 0 8 7"><path d="M.5 0v7M2.500 0v7M4.500 0v7M6.500 0v7" stroke="#8ea4e4"/></svg></i><b></b><button aria-label="right">${chevron("M3 0l4 4-4 4")}</button></div>
          </div>
        </section>
        <section class="view">
          ${scene}
          <div class="dialog" role="dialog" aria-label="拾取碎片">
            <div class="dtitle"><span>拾取碎片</span><button aria-label="close">${cross(12)}</button></div>
            <div class="dbody">
              <div class="dtop">
                <fieldset>
                  <legend>拾取操作</legend>
                  <label><input type="radio" name="pick" checked /><span class="f">${mixed("保留(仅一个)")}</span></label>
                  <label><input type="radio" name="pick" /><span>删除</span></label>
                </fieldset>
                <div class="dcol">
                  <button class="xp"><span>${key("拾取", "P")}</span></button>
                  <button class="xp"><span>${key("U 撤消", "U")}</span></button>
                  <button class="xp"><span>${key("重置", "R")}</span></button>
                </div>
              </div>
              <div class="dfoot">
                <button class="xp" aria-label="ok"><svg width="18" height="18" viewBox="0 0 18 18"><path d="M1 9l4-2 2 5c2-5 5-9 10-12-4 6-6 11-8 17H6z" fill="#3fb52c" stroke="#1c6a18"/></svg></button>
                <button class="xp" aria-label="cancel"><svg width="20" height="18" viewBox="0 0 18 18"><path d="M1 3l4-2 4 4 5-4 3 3-4 5 4 4-4 4-4-4-5 4-3-3 4-5z" fill="#f0441c" stroke="#98200c"/></svg></button>
                <button class="xp" aria-label="help">${icon("ask3d", 18)}</button>
              </div>
            </div>
          </div>
        </section>
        <div class="vbar right"><div class="tray">${cells(RIGHT_A)}</div><div class="tray">${cells(RIGHT_B)}</div></div>
        <div class="float">
          <div class="ftitle"><span>验证</span><button aria-label="close">${cross(7)}</button></div>
          <div class="fbody"><button class="help" aria-label="verify">${icon("verify")}</button><span></span><button class="help" aria-label="help">${icon("ask3d")}</button></div>
        </div>
      </main>

      <footer class="status">
        <button class="w0">${mixed("3D")}</button><button class="scr">屏幕视角</button><button class="pl">平面</button>
        <label for="zval"><span class="a">Z</span></label>
        <div class="edit yb"><input id="zval" class="zv" .value=${"0.0"} /><span class="fill"></span><button aria-label="Z list">${chevron()}</button></div>
        <input class="n15" aria-label="颜色" .value=${"15"} /><button class="tri" aria-label="down"><svg width="9" height="8" viewBox="0 0 9 8"><path d="M0 0h9L4.500 8z"/></svg></button>
        <label for="lay">层别</label>
        <div class="pick lay"><select id="lay"><option>1</option></select><span class="arr">${chevron()}</span></div>
        <button class="red">属性</button>
        <div class="pick mk"><select aria-label="点型"><option></option></select><svg class="ink" width="12" height="12" viewBox="0 0 12 12"><path d="M1 6.500h10M6 2v9M3 10l6-7" stroke="#000"/></svg><span class="arr">${chevron()}</span></div>
        ${this.line("线型", 3)}${this.line("线宽", 1)}
        <button class="w1">${mixed("WCS")}</button><button class="w2">群组</button><button class="w3">${mixed("!")}</button><button class="w4">${mixed("?")}</button>
      </footer>
      <div class="task"><i></i></div>
    `;
  }
}

customElements.define("app-root", AppRoot);
